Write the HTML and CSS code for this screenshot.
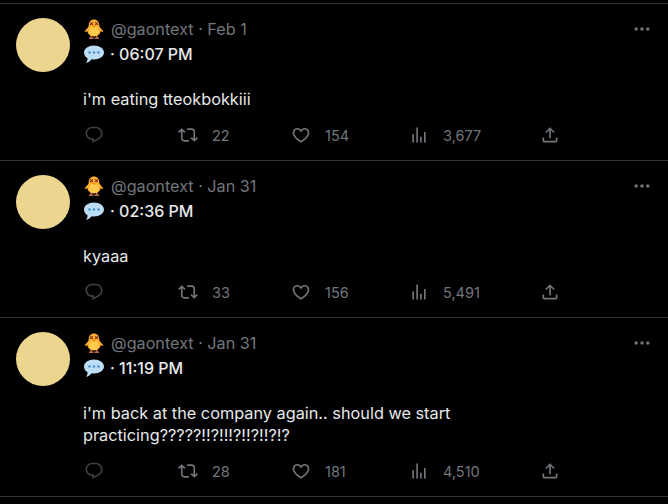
FILE: index.html
```html
<!DOCTYPE html>
<html>
  <head>
    <title>gaontext</title>
    <link rel="stylesheet" href="styles.css">
  </head>
  <body>
    <svg class="defs" width="0" height="0">
      <symbol id="chick" viewBox="0 0 20 20">
        <path fill="#c1694f" d="M6.500 16h1.500v2.500h1.500V20H5v-1.500h1.500zM12 16h1.500v2.500H15V20h-4.500v-1.500H12z"/>
        <path fill="#ffac33" d="M10 .5c3.200 0 5.200 2.300 5.200 5.200 0 1.100.3 1.900.9 2.700l3.400 4.100c-1 .5-2 .3-2.900-.2C16 15.500 13.500 17.500 10 17.500s-6-2-6.600-5.200c-.9.5-1.900.7-2.900.2l3.400-4.100c.6-.8.900-1.600.9-2.700C4.800 2.800 6.800.5 10 .5z"/>
        <path fill="#ffcc4d" d="M10 7.500c3 0 4.800 2.200 4.800 4.800S13 17 10 17s-4.800-2-4.800-4.700S7 7.500 10 7.500z"/>
        <path fill="#662113" d="M5.800 3.600l.7-.6 1 1 1-1 .6.600-1 1 1 1-.6.600-1-1-1 1-.7-.6 1-1zM10.900 3.600l.6-.6 1 1 1-1 .7.600-1 1 1 1-.7.600-1-1-1 1-.6-.6 1-1z"/>
        <path fill="#f4900c" d="M8 6.500h4l-2 3z"/>
      </symbol>
      <symbol id="balloon" viewBox="0 0 20 20">
        <path fill="#bbddf5" d="M10 1.500c5.500 0 10 2.900 10 6.900s-4.500 7-10 7c-.8 0-1.600-.1-2.400-.2C6.200 17 4 18.700 1.800 19c1-1 1.700-2.500 1.800-4.800C1.400 13 0 10.900 0 8.400 0 4.400 4.500 1.500 10 1.500z"/>
        <circle fill="#4f94cb" cx="5.500" cy="8.500" r="1.300"/>
        <circle fill="#4f94cb" cx="10" cy="8.500" r="1.300"/>
        <circle fill="#4f94cb" cx="14.500" cy="8.500" r="1.300"/>
      </symbol>
      <symbol id="reply" viewBox="0 0 24 24">
        <path d="M1.751 10c0-4.420 3.584-8 8.005-8h4.366c4.490 0 8.129 3.640 8.129 8.130 0 2.960-1.607 5.680-4.196 7.110l-8.054 4.460v-3.690h-.067c-4.490.1-8.183-3.510-8.183-8.010zm8.005-6c-3.317 0-6.005 2.690-6.005 6 0 3.370 2.770 6.080 6.138 6.010l.351-.01h1.761v2.300l5.087-2.810c1.951-1.080 3.163-3.130 3.163-5.360 0-3.390-2.744-6.130-6.129-6.130H9.756z"/>
      </symbol>
      <symbol id="retweet" viewBox="0 0 24 24">
        <path d="M4.500 3.880l4.432 4.140-1.364 1.460L5.500 7.550V16c0 1.100.896 2 2 2H13v2H7.500c-2.209 0-4-1.790-4-4V7.550L1.432 9.480.068 8.020 4.500 3.880zM16.500 6H11V4h5.500c2.209 0 4 1.790 4 4v8.450l2.068-1.930 1.364 1.460-4.432 4.140-4.432-4.140 1.364-1.460 2.068 1.930V8c0-1.100-.896-2-2-2z"/>
      </symbol>
      <symbol id="heart" viewBox="0 0 24 24">
        <path d="M16.697 5.500c-1.222-.06-2.679.51-3.890 2.160l-.805 1.090-.806-1.090C9.984 6.010 8.526 5.440 7.304 5.500c-1.243.07-2.349.78-2.910 1.910-.552 1.120-.633 2.780.479 4.820 1.074 1.970 3.257 4.270 7.129 6.610 3.870-2.340 6.052-4.640 7.126-6.610 1.111-2.040 1.030-3.700.477-4.820-.561-1.130-1.666-1.840-2.908-1.910zm4.187 7.690c-1.351 2.480-4.001 5.120-8.379 7.670l-.503.3-.504-.3c-4.379-2.550-7.029-5.190-8.382-7.670-1.360-2.500-1.410-4.860-.514-6.670.887-1.790 2.647-2.910 4.601-3.010 1.651-.09 3.368.56 4.798 2.010 1.429-1.450 3.146-2.100 4.796-2.010 1.954.1 3.714 1.220 4.601 3.010.896 1.810.846 4.170-.514 6.670z"/>
      </symbol>
      <symbol id="views" viewBox="0 0 24 24">
        <path d="M8.750 21V3h2v18h-2zM18 21V8.500h2V21h-2zM4 21l.004-10h2L6 21H4zm9.248 0v-7h2v7h-2z"/>
      </symbol>
      <symbol id="share" viewBox="0 0 24 24">
        <path d="M12 2.590l5.700 5.700-1.410 1.420L13 6.410V16h-2V6.410l-3.300 3.300-1.410-1.420L12 2.590zM21 15l-.02 3.510c0 1.380-1.120 2.490-2.500 2.490H5.500C4.110 21 3 19.880 3 18.500V15h2v3.500c0 .28.220.5.500.5h12.980c.28 0 .5-.22.5-.5L19 15h2z"/>
      </symbol>
      <symbol id="more" viewBox="0 0 24 24">
        <path d="M3 12c0-1.100.9-2 2-2s2 .9 2 2-.9 2-2 2-2-.9-2-2zm9 2c1.100 0 2-.9 2-2s-.9-2-2-2-2 .9-2 2 .9 2 2 2zm7 0c1.100 0 2-.9 2-2s-.9-2-2-2-2 .9-2 2 .9 2 2 2z"/>
      </symbol>
    </svg>

    <div class="feed">
      <div class="tweet">
        <div class="avatar"></div>
        <div class="main">
          <div class="head">
            <svg class="emoji"><use href="#chick"/></svg>
            <span class="handle">@gaontext · Feb 1</span>
            <svg class="more"><use href="#more"/></svg>
          </div>
          <div class="subhead">
            <svg class="emoji"><use href="#balloon"/></svg>
            <span>· 06:07 PM</span>
          </div>
          <p class="text">i'm eating tteokbokkiii</p>
          <div class="actions">
            <div class="action"><svg class="icon dim"><use href="#reply"/></svg></div>
            <div class="action"><svg class="icon"><use href="#retweet"/></svg><span>22</span></div>
            <div class="action"><svg class="icon"><use href="#heart"/></svg><span>154</span></div>
            <div class="action"><svg class="icon"><use href="#views"/></svg><span>3,677</span></div>
            <div class="action"><svg class="icon"><use href="#share"/></svg></div>
          </div>
        </div>
      </div>

      <div class="tweet">
        <div class="avatar"></div>
        <div class="main">
          <div class="head">
            <svg class="emoji"><use href="#chick"/></svg>
            <span class="handle">@gaontext · Jan 31</span>
            <svg class="more"><use href="#more"/></svg>
          </div>
          <div class="subhead">
            <svg class="emoji"><use href="#balloon"/></svg>
            <span>· 02:36 PM</span>
          </div>
          <p class="text">kyaaa</p>
          <div class="actions">
            <div class="action"><svg class="icon dim"><use href="#reply"/></svg></div>
            <div class="action"><svg class="icon"><use href="#retweet"/></svg><span>33</span></div>
            <div class="action"><svg class="icon"><use href="#heart"/></svg><span>156</span></div>
            <div class="action"><svg class="icon"><use href="#views"/></svg><span>5,491</span></div>
            <div class="action"><svg class="icon"><use href="#share"/></svg></div>
          </div>
        </div>
      </div>

      <div class="tweet">
        <div class="avatar"></div>
        <div class="main">
          <div class="head">
            <svg class="emoji"><use href="#chick"/></svg>
            <span class="handle">@gaontext · Jan 31</span>
            <svg class="more"><use href="#more"/></svg>
          </div>
          <div class="subhead">
            <svg class="emoji"><use href="#balloon"/></svg>
            <span>· 11:19 PM</span>
          </div>
          <p class="text">i'm back at the company again.. should we start<br>practicing?????!!?!!!?!!?!!?!?</p>
          <div class="actions">
            <div class="action"><svg class="icon dim"><use href="#reply"/></svg></div>
            <div class="action"><svg class="icon"><use href="#retweet"/></svg><span>28</span></div>
            <div class="action"><svg class="icon"><use href="#heart"/></svg><span>181</span></div>
            <div class="action"><svg class="icon"><use href="#views"/></svg><span>4,510</span></div>
            <div class="action"><svg class="icon"><use href="#share"/></svg></div>
          </div>
        </div>
      </div>
    </div>
  </body>
</html>
```
FILE: styles.css
```css
html, body { margin: 0; padding: 0; background-color: #000000; }
body { font: normal 16.2px Inter, "Open Sans", sans-serif; color: #e7e9ea; height: 504px; overflow: hidden; }
.defs { display: block; height: 0; }

.feed { margin-top: 3px; border-top: 1px solid #2f3336; }
.tweet { display: flex; gap: 14px; padding: 14px 16px 0 16px; border-bottom: 1px solid #2f3336; }
.avatar { flex: none; width: 54px; height: 54px; border-radius: 50%; background-color: #ecd68f; }
.main { flex: 1; min-width: 0; }

.head { display: flex; align-items: center; gap: 7px; height: 22px; color: #71767b; }
.subhead { display: flex; align-items: center; gap: 6px; height: 24px; margin-top: 2px; font-size: 16px; font-weight: 500; color: #e7e9ea; }
.emoji { flex: none; width: 20px; height: 20px; }
.more { flex: none; width: 20px; height: 20px; margin-left: auto; fill: #71767b; }

.text { margin: 22px 0 0 -1px; font-size: 16.3px; line-height: 22px; }

.actions { display: grid; grid-template-columns: 94px 113px 118px 131px 20px; height: 20px; margin-top: 15px; padding-bottom: 15px; }
.action { display: flex; align-items: center; gap: 14px; color: #71767b; font-size: 14.5px; }
.icon { flex: none; width: 20px; height: 20px; fill: #71767b; }
.dim { fill: #3e4144; }
```
